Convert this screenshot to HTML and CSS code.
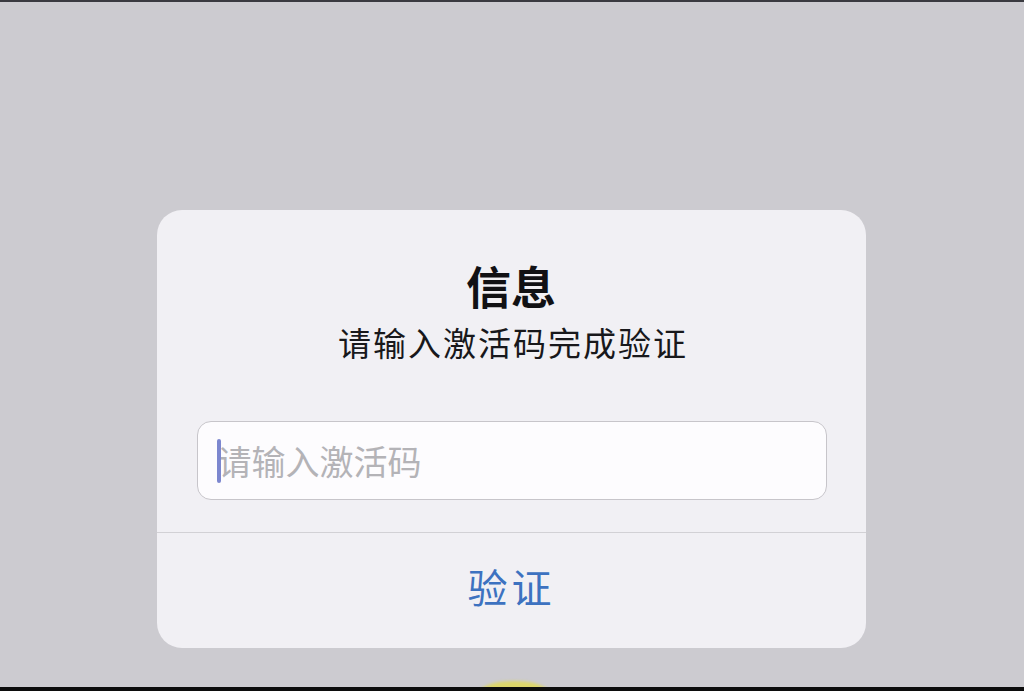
FILE: index.html
```html
<!DOCTYPE html>
<html lang="zh-CN">
<head>
<meta charset="utf-8">
<title>信息</title>
<link rel="stylesheet" href="styles.css">
</head>
<body>
<div class="top-line"></div>
<div class="stage">
  <div class="dialog">
    <div class="title">信息</div>
    <div class="message">请输入激活码完成验证</div>
    <div class="field-wrap">
      <div class="field">
        <span class="caret"></span>
        <span class="placeholder">请输入激活码</span>
      </div>
    </div>
    <div class="separator"></div>
    <div class="action">验证</div>
  </div>
  <div class="home-glow"></div>
</div>
<div class="bottom-bar"></div>
</body>
</html>
```
FILE: styles.css
```css
html, body {
  margin: 0;
  padding: 0;
}
body {
  width: 1024px;
  height: 691px;
  overflow: hidden;
  display: flex;
  flex-direction: column;
  background: #cccbd0;
  font-family: "Noto Sans CJK SC", "Noto Sans", sans-serif;
}
.top-line {
  height: 2px;
  background: #3a3a40;
  flex: none;
}
.stage {
  flex: 1;
  position: relative;
  overflow: hidden;
  padding-top: 208px;
  box-sizing: border-box;
}
.dialog {
  width: 709px;
  margin: 0 auto;
  background: #f1f0f4;
  border-radius: 25px;
  padding-top: 50px;
  box-sizing: border-box;
  display: flex;
  flex-direction: column;
  align-items: stretch;
  position: relative;
  left: -1px;
}
.title {
  font-size: 45px;
  line-height: 52px;
  font-weight: 700;
  color: #111114;
  text-align: center;
}
.message {
  margin-top: 10px;
  font-size: 33px;
  line-height: 40px;
  letter-spacing: 2px;
  padding-left: 4px;
  color: #18181b;
  text-align: center;
}
.field-wrap {
  padding: 59px 39px 32px 40px;
}
.field {
  position: relative;
  height: 79px;
  box-sizing: border-box;
  border: 1px solid #c7c5ca;
  border-radius: 14px;
  background: #fdfcfe;
  display: flex;
  align-items: center;
  padding-left: 20px;
}
.placeholder {
  font-size: 34px;
  line-height: 40px;
  color: #b4b3b7;
}
.caret {
  position: absolute;
  left: 19px;
  top: 17px;
  width: 4px;
  height: 44px;
  border-radius: 2px;
  background: #7c87cf;
}
.separator {
  height: 1px;
  background: #d2d1d5;
}
.action {
  height: 115px;
  line-height: 107px;
  padding-bottom: 8px;
  box-sizing: border-box;
  font-size: 40px;
  letter-spacing: 4px;
  padding-left: 1px;
  color: #3d72c0;
  text-align: center;
}
.home-glow {
  position: absolute;
  left: 480px;
  bottom: -16px;
  width: 68px;
  height: 22px;
  border-radius: 50%;
  background: #ddd66a;
  filter: blur(1.5px);
}
.bottom-bar {
  height: 4px;
  background: #0c0c0c;
  flex: none;
  position: relative;
}
```
